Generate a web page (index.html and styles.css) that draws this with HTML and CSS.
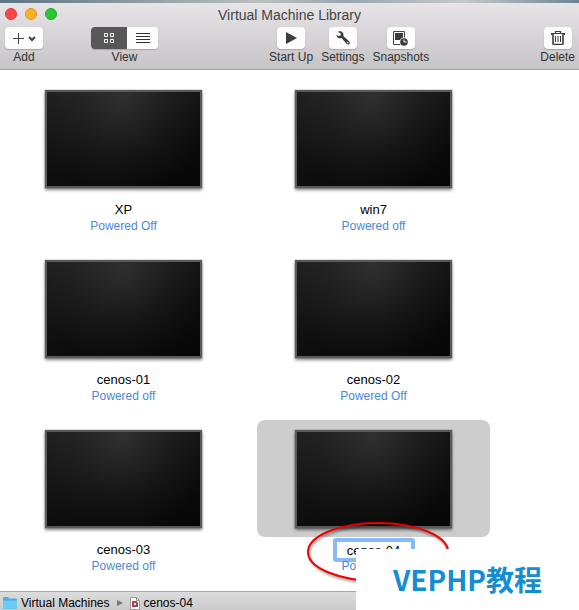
FILE: index.html
```html
<!DOCTYPE html>
<html lang="en">
<head>
  <meta charset="UTF-8">
  <meta name="viewport" content="width=device-width, initial-scale=1.0">
  <title>Virtual Machine Library</title>
  <link rel="stylesheet" href="styles.css">
</head>
<body>
  <div class="desktop-strip"></div>

  <!-- Title bar and toolbar -->
  <header class="window-header">
    <div class="title-bar">
      <div class="window-controls">
        <button class="dot dot-close" type="button" aria-label="Close"></button>
        <button class="dot dot-minimize" type="button" aria-label="Minimize"></button>
        <button class="dot dot-zoom" type="button" aria-label="Zoom"></button>
      </div>
      <h1>Virtual Machine Library</h1>
    </div>

    <div class="toolbar">
      <div class="tool-group tool-group-left">
        <div class="tool">
          <button class="tool-button add-button" type="button" aria-labelledby="add-label">
            <svg width="24" height="14" viewBox="0 0 24 14">
              <path d="M1 7.5h11M6.5 2v11" stroke="#444" fill="none"/>
              <path d="M17 6l3 3 3-3" stroke="#444" stroke-width="2" fill="none"/>
            </svg>
          </button>
          <span id="add-label">Add</span>
        </div>
        <div class="tool">
          <div class="segmented" role="group" aria-labelledby="view-label">
            <button class="segment segment-grid active" type="button" aria-label="Icon view">
              <svg width="10" height="10" viewBox="0 0 10 10">
                <path d="M.5.5h3v3h-3zM6.5.5h3v3h-3zM.5 6.5h3v3h-3zM6.5 6.5h3v3h-3z" stroke="#fff" fill="none"/>
              </svg>
            </button>
            <button class="segment" type="button" aria-label="List view">
              <svg width="14" height="10" viewBox="0 0 14 10">
                <path d="M0 .5h14M0 3.5h14M0 6.5h14M0 9.5h14" stroke="#333" fill="none"/>
              </svg>
            </button>
          </div>
          <span id="view-label">View</span>
        </div>
      </div>

      <div class="tool-group">
        <div class="tool">
          <button class="tool-button" type="button" aria-labelledby="start-label">
            <svg width="12" height="12" viewBox="0 0 12 12"><path d="M1 0l11 6-11 6z" fill="#3c3c3c"/></svg>
          </button>
          <span id="start-label">Start Up</span>
        </div>
        <div class="tool">
          <button class="tool-button" type="button" aria-labelledby="settings-label">
            <svg width="14" height="14" viewBox="0 0 14 14">
              <path d="M1.5.8C3.5-.2 6.3.2 7.200 2.300c.4 1 .3 1.800.1 2.600l5.800 5.300c.9.900.9 2 .2 2.700-.8.800-1.900.8-2.700-.1L5.500 7C3.400 7.700.8 6.800.3 3.900l2.500 1 1.700-.5.300-1.900z" fill="#3c3c3c"/>
              <circle cx="11.8" cy="11.5" r=".8" fill="#fff"/>
            </svg>
          </button>
          <span id="settings-label">Settings</span>
        </div>
        <div class="tool">
          <button class="tool-button" type="button" aria-labelledby="snapshots-label">
            <svg width="15" height="15" viewBox="0 0 15 15">
              <path d="M.5.5h11v13H.5z" stroke="#444" fill="#fcfcfc"/>
              <path d="M2 2h8v7H2z" fill="#3c3c3c"/>
              <circle cx="11" cy="11" r="4.5" fill="#fcfcfc"/>
              <circle cx="11" cy="11" r="3.8" fill="#3c3c3c"/>
              <path d="M11 8.5V11h2.5" stroke="#fff" fill="none"/>
            </svg>
          </button>
          <span id="snapshots-label">Snapshots</span>
        </div>
      </div>

      <div class="tool">
        <button class="tool-button" type="button" aria-labelledby="delete-label">
          <svg width="14" height="14" viewBox="0 0 14 14" fill="none" stroke="#3c3c3c">
            <path d="M.5 4V2.500h13V4M4.500 2.500v-2h5v2" stroke-width="1.200"/>
            <path d="M2 3v9.500q0 1 1 1h8q1 0 1-1V3" stroke-width="1.600"/>
            <path d="M4.500 5v6M7 5v6M9.500 5v6"/>
          </svg>
        </button>
        <span id="delete-label">Delete</span>
      </div>
    </div>
  </header>

  <!-- Machines -->
  <main class="library">
    <div class="machine">
      <div class="preview"><div class="screen"></div></div>
      <h2>XP</h2>
      <p>Powered Off</p>
    </div>
    <div class="machine">
      <div class="preview"><div class="screen"></div></div>
      <h2>win7</h2>
      <p>Powered off</p>
    </div>
    <div class="machine">
      <div class="preview"><div class="screen"></div></div>
      <h2>cenos-01</h2>
      <p>Powered off</p>
    </div>
    <div class="machine">
      <div class="preview"><div class="screen"></div></div>
      <h2>cenos-02</h2>
      <p>Powered Off</p>
    </div>
    <div class="machine">
      <div class="preview"><div class="screen"></div></div>
      <h2>cenos-03</h2>
      <p>Powered off</p>
    </div>
    <div class="machine selected">
      <div class="preview"><div class="screen"></div></div>
      <input class="name-input" type="text" value="cenos-04" aria-label="Machine name">
      <p>Powered off</p>
      <svg class="highlight-ring" width="146" height="66" viewBox="0 0 146 66">
        <ellipse cx="73" cy="32" rx="70" ry="29" fill="none" stroke="#f00000" stroke-width="2"/>
      </svg>
    </div>
  </main>

  <!-- Path bar -->
  <footer class="path-bar">
    <svg width="14" height="12" viewBox="0 0 14 12">
      <path d="M0 1q0-1 1-1h4l1 1.500h7q1 0 1 1V11q0 1-1 1H1q-1 0-1-1z" fill="#48ade0"/>
      <path d="M0 3.500h14V11q0 .7-1 .7H1q-1 0-1-.7z" fill="#6bcbf5"/>
    </svg>
    <span>Virtual Machines</span>
    <svg class="path-arrow" width="6" height="6" viewBox="0 0 6 6"><path d="M0 0l6 3-6 3z" fill="#777"/></svg>
    <svg width="10" height="13" viewBox="0 0 10 13">
      <path d="M.5.5h6l3 3v9h-9z" fill="#fff" stroke="#999"/>
      <path d="M6.500.5v3h3" fill="none" stroke="#999"/>
      <path d="M2 4h4.500l1.500 2v4H2z" fill="#e0303a"/>
      <path d="M3.500 6H8v4H5z" fill="#3565b5"/>
      <path d="M4 6h2v2H4z" fill="#fff"/>
    </svg>
    <span>cenos-04</span>
  </footer>

  <div class="watermark" lang="zh">VEPHP教程</div>
</body>
</html>
```
FILE: styles.css
```css
* {
  box-sizing: border-box;
}

body {
  display: flex;
  flex-direction: column;
  min-height: 100vh;
  margin: 0;
  position: relative;
  background-color: #fff;
  color: #000;
  font-family: "Liberation Sans", Arial, sans-serif;
  font-size: 12px;
  line-height: 16px;
}

button {
  border: none;
  padding: 0;
}

.desktop-strip {
  height: 3px;
  background: linear-gradient(to right, #5d7482, #b9c1bf 45%, #98a5b0 60%, #c4c9c9 80%, #6d8494);
}

/* Header */
.window-header {
  height: 67px;
  background: linear-gradient(#e6e4e7, #c6c4c7);
  border-bottom: 1px solid #a09fa1;
  color: #333;
}

.title-bar {
  display: grid;
  grid-template-columns: 1fr auto 1fr;
  align-items: center;
  height: 24px;
  padding: 0 5px;
}

.title-bar h1 {
  margin: 0;
  color: #444;
  font-size: 14px;
  font-weight: normal;
}

.window-controls {
  display: flex;
  gap: 8px;
  padding-bottom: 2px;
}

.dot {
  width: 12px;
  height: 12px;
  border-radius: 50%;
}

.dot-close {
  background-color: #fa4848;
  border: 1px solid #e0363c;
}

.dot-minimize {
  background-color: #fdb124;
  border: 1px solid #dc9528;
}

.dot-zoom {
  background-color: #2bc632;
  border: 1px solid #20ac2a;
}

.toolbar {
  display: flex;
  justify-content: space-between;
  padding: 0 4px 0 5px;
}

.tool-group {
  display: flex;
  gap: 8px;
}

.tool-group-left {
  gap: 48px;
}

.tool {
  display: flex;
  flex-direction: column;
  align-items: center;
}

.tool-button,
.segmented {
  display: flex;
  align-items: center;
  justify-content: center;
  height: 22px;
  border-radius: 4px;
  background-color: #fcfcfc;
  box-shadow: 0 1px 1px rgba(0, 0, 0, 0.2);
}

.tool-button {
  width: 28px;
}

.add-button {
  width: 38px;
}

.segmented {
  overflow: hidden;
}

.segment {
  display: flex;
  align-items: center;
  justify-content: center;
  width: 31px;
  height: 22px;
  background-color: #fcfcfc;
}

.segment-grid {
  width: 36px;
}

.segment.active {
  background-color: #575757;
}

/* Machines */
.library {
  flex: 1;
  display: grid;
  grid-template-columns: repeat(auto-fill, 233px);
  align-content: start;
  column-gap: 17px;
  row-gap: 16px;
  padding: 10px 7px 0;
}

.machine {
  position: relative;
  display: flex;
  flex-direction: column;
  align-items: center;
  height: 154px;
}

.preview {
  display: flex;
  justify-content: center;
  width: 100%;
  height: 117px;
  padding-top: 10px;
  border-radius: 8px;
}

.selected .preview {
  background-color: #cdcdcd;
}

.screen {
  width: 157px;
  height: 98px;
  border: 2px solid #5a5a5a;
  outline: 1px solid rgba(0, 0, 0, 0.1);
  background:
    radial-gradient(ellipse at 50% 5%, rgba(255, 255, 255, 0.1), rgba(255, 255, 255, 0.03) 45%, transparent 80%),
    linear-gradient(160deg, #1e1e1e, #0e0e0e 60%, #060606);
  box-shadow: 0 2px 3px rgba(0, 0, 0, 0.5);
}

.machine h2 {
  margin: 5px 0 0;
  font-size: 13px;
  font-weight: normal;
}

.machine p {
  margin: 0;
  color: #4a88d8;
}

.name-input {
  width: 82px;
  height: 24px;
  margin-top: 1px;
  padding: 0;
  border: 4px solid #88b9f8;
  border-radius: 3px;
  background-color: #fff;
  font-family: inherit;
  font-size: 13px;
  text-align: center;
  outline: none;
}

.selected p {
  margin-top: -4px;
}

/* Red ring drawn over the name being edited */
.highlight-ring {
  position: absolute;
  top: 100px;
  left: 48px;
  filter: drop-shadow(1px 2px 1px rgba(0, 0, 0, 0.4));
  pointer-events: none;
}

/* Path bar */
.path-bar {
  display: flex;
  align-items: center;
  gap: 4px;
  height: 19px;
  padding: 4px 3px 0;
  border-top: 1px solid #a8a8a8;
  background: linear-gradient(#dcdcdc, #cbcbcb);
}

.path-arrow {
  margin: 0 3px;
}

.watermark {
  position: absolute;
  right: 0;
  bottom: 0;
  width: 223px;
  height: 61px;
  background-color: #fff;
  color: #148dd2;
  font-family: "Noto Sans CJK SC", sans-serif;
  font-size: 28px;
  font-weight: bold;
  line-height: 61px;
  text-align: center;
}
```
